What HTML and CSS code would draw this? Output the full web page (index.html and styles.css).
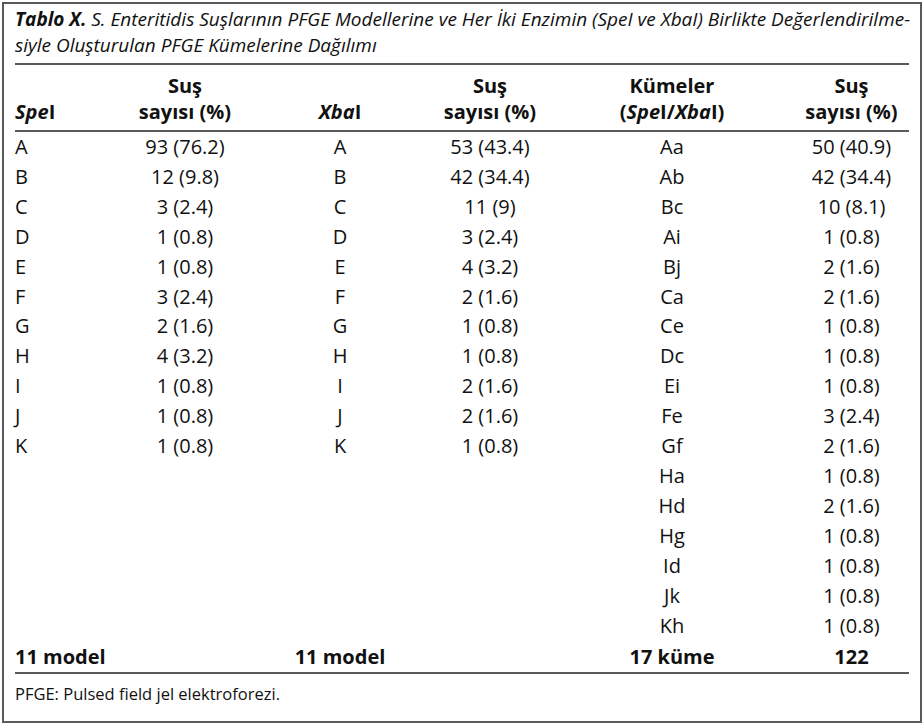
FILE: index.html
```html
<!DOCTYPE html>
<html lang="tr">
<head>
<meta charset="utf-8">
<title>Tablo X</title>
<link rel="stylesheet" href="styles.css">
</head>
<body>
<div class="frame">
  <p class="caption"><b>Tablo X.</b> S. Enteritidis Suşlarının PFGE Modellerine ve Her İki Enzimin (SpeI ve XbaI) Birlikte Değerlendirilme-<br>siyle Oluşturulan PFGE Kümelerine Dağılımı</p>
  <table class="data">
    <colgroup>
      <col class="c1"><col class="c2"><col class="c3"><col class="c4"><col class="c5"><col class="c6">
    </colgroup>
    <thead>
      <tr class="h1">
        <th></th><th>Suş</th><th></th><th>Suş</th><th>Kümeler</th><th>Suş</th>
      </tr>
      <tr class="h2">
        <th class="lft"><i>Spe</i>I</th><th>sayısı (%)</th><th><i>Xba</i>I</th><th>sayısı (%)</th><th>(<i>Spe</i>I/<i>Xba</i>I)</th><th>sayısı (%)</th>
      </tr>
    </thead>
    <tbody>
      <tr><td>A</td><td>93 (76.2)</td><td>A</td><td>53 (43.4)</td><td>Aa</td><td>50 (40.9)</td></tr>
      <tr><td>B</td><td>12 (9.8)</td><td>B</td><td>42 (34.4)</td><td>Ab</td><td>42 (34.4)</td></tr>
      <tr><td>C</td><td>3 (2.4)</td><td>C</td><td>11 (9)</td><td>Bc</td><td>10 (8.1)</td></tr>
      <tr><td>D</td><td>1 (0.8)</td><td>D</td><td>3 (2.4)</td><td>Ai</td><td>1 (0.8)</td></tr>
      <tr><td>E</td><td>1 (0.8)</td><td>E</td><td>4 (3.2)</td><td>Bj</td><td>2 (1.6)</td></tr>
      <tr><td>F</td><td>3 (2.4)</td><td>F</td><td>2 (1.6)</td><td>Ca</td><td>2 (1.6)</td></tr>
      <tr><td>G</td><td>2 (1.6)</td><td>G</td><td>1 (0.8)</td><td>Ce</td><td>1 (0.8)</td></tr>
      <tr><td>H</td><td>4 (3.2)</td><td>H</td><td>1 (0.8)</td><td>Dc</td><td>1 (0.8)</td></tr>
      <tr><td>I</td><td>1 (0.8)</td><td>I</td><td>2 (1.6)</td><td>Ei</td><td>1 (0.8)</td></tr>
      <tr><td>J</td><td>1 (0.8)</td><td>J</td><td>2 (1.6)</td><td>Fe</td><td>3 (2.4)</td></tr>
      <tr><td>K</td><td>1 (0.8)</td><td>K</td><td>1 (0.8)</td><td>Gf</td><td>2 (1.6)</td></tr>
      <tr><td></td><td></td><td></td><td></td><td>Ha</td><td>1 (0.8)</td></tr>
      <tr><td></td><td></td><td></td><td></td><td>Hd</td><td>2 (1.6)</td></tr>
      <tr><td></td><td></td><td></td><td></td><td>Hg</td><td>1 (0.8)</td></tr>
      <tr><td></td><td></td><td></td><td></td><td>Id</td><td>1 (0.8)</td></tr>
      <tr><td></td><td></td><td></td><td></td><td>Jk</td><td>1 (0.8)</td></tr>
      <tr><td></td><td></td><td></td><td></td><td>Kh</td><td>1 (0.8)</td></tr>
    </tbody>
    <tfoot>
      <tr><td>11 model</td><td></td><td>11 model</td><td></td><td>17 küme</td><td>122</td></tr>
    </tfoot>
  </table>
  <p class="note">PFGE: Pulsed field jel elektroforezi.</p>
</div>
</body>
</html>
```

FILE: styles.css
```css
html, body {
  margin: 0;
  padding: 0;
  background: #fff;
}
body {
  font-family: "Open Sans", "Liberation Sans", sans-serif;
  color: #111;
  font-size: 20px;
}
.frame {
  margin: 2px 2px 0 2px;
  box-sizing: border-box;
  width: 920px;
  height: 721px;
  border: 2px solid #5a5a5a;
  padding: 0 11px;
}
.caption {
  margin: 0;
  padding-top: 2px;
  font-size: 19px;
  font-style: italic;
  line-height: 26px;
  height: 57px;
  white-space: nowrap;
}
.caption b {
  font-weight: 700;
}
.data {
  width: 100%;
  border-collapse: collapse;
  table-layout: fixed;
}
.c1 { width: 105px; }
.c2 { width: 130px; }
.c3 { width: 180px; }
.c4 { width: 120px; }
.c5 { width: 244px; }
.c6 { width: auto; }
.data thead th {
  font-weight: 700;
  padding: 0;
  line-height: 26px;
  text-align: center;
  white-space: nowrap;
}
.data thead th.lft { text-align: left; }
.data thead tr.h1 th {
  border-top: 2px solid #5a5a5a;
  padding-top: 8px;
}
.data thead tr.h2 th {
  padding-bottom: 5px;
  border-bottom: 2px solid #5a5a5a;
}
.data tbody td {
  padding: 0;
  line-height: 29.9px;
  text-align: center;
  white-space: nowrap;
}
.data tbody td:first-child,
.data tfoot td:first-child {
  text-align: left;
}
.data tfoot td {
  font-weight: 700;
  text-align: center;
  line-height: 30px;
  padding: 2px 0 0 0;
  border-bottom: 2px solid #5a5a5a;
  white-space: nowrap;
}
.note {
  margin: 0;
  line-height: 40px;
  font-size: 16.5px;
}
```
